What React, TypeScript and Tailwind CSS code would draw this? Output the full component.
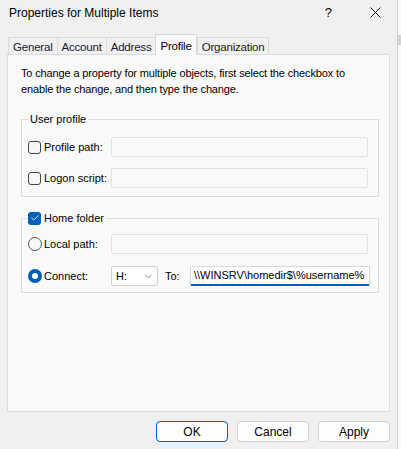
import { ChevronDown, Check } from 'lucide-react';

const dlgFont = { fontFamily: '"Liberation Sans", Arial, sans-serif' };

function Tab({ label, active }: { label: string; active?: boolean }) {
  if (active) {
    return (
      <div className="relative z-10 -mb-px h-[21px] px-[4px] pt-[3px] bg-[#f9f9f9] border border-b-0 border-[#d9d9d9] text-[11.5px] tracking-[-0.2px] text-black">
        {label}
      </div>
    );
  }
  return (
    <div className="h-[17px] px-[4px] pt-[2px] bg-[#f0f0f0] border border-b-0 border-[#dadada] -mr-px text-[11.5px] tracking-[-0.2px] text-[#1a1a2e] leading-[15px]">
      {label}
    </div>
  );
}

function CheckBox({ checked }: { checked?: boolean }) {
  if (checked) {
    return (
      <span className="flex items-center justify-center w-[13px] h-[13px] rounded-[3px] bg-[#005fb8]">
        <Check size={10} strokeWidth={2} className="text-white" />
      </span>
    );
  }
  return <span className="block w-[13px] h-[13px] rounded-[3px] border border-[#444] bg-[#f6f6f6]" />;
}

function Radio({ checked }: { checked?: boolean }) {
  if (checked) {
    return (
      <span className="flex items-center justify-center w-[14px] h-[14px] rounded-full bg-[#005fb8]">
        <span className="block w-[6px] h-[6px] rounded-full bg-white" />
      </span>
    );
  }
  return <span className="block w-[14px] h-[14px] rounded-full border border-[#555] bg-[#f6f6f6]" />;
}

function EmptyField() {
  return <div className="w-[257px] h-[20px] rounded-[2px] border border-[#e2e2e2] bg-[#f9f9f9]" />;
}

function Button({ label, focused }: { label: string; focused?: boolean }) {
  return (
    <button
      className={
        'w-[72px] h-[21px] rounded-[4px] bg-[#fdfdfd] text-[12px] text-black leading-none ' +
        (focused ? 'border border-[#005fb8]' : 'border border-[#d0d0d0]')
      }
    >
      {label}
    </button>
  );
}

export default function App() {
  return (
    <div className="flex w-[401px] h-[449px] bg-[#f0f0f0] overflow-hidden" style={dlgFont}>
      <div className="w-[397px] flex flex-col">
        {/* title bar */}
        <div className="h-[25px] flex items-center pl-[9px] pr-[16px]">
          <span className="text-[12px] text-black">Properties for Multiple Items</span>
          <span className="ml-auto mr-[38px] text-[13px] text-black">?</span>
          <svg width="11" height="11" viewBox="0 0 11 11" className="mb-[1px]">
            <path d="M0.5 0.5 L10.5 10.5 M10.5 0.5 L0.5 10.5" stroke="#111" strokeWidth="1" fill="none" />
          </svg>
        </div>

        {/* tabs */}
        <div className="mt-[9px] h-[20px] flex items-end pl-[8px]">
          <Tab label="General" />
          <Tab label="Account" />
          <Tab label="Address" />
          <Tab label="Profile" active />
          <Tab label="Organization" />
        </div>

        {/* page */}
        <div className="ml-[7px] w-[383px] h-[358px] border border-[#dcdcdc] bg-[#f9f9f9] pl-[13px] pt-[10px] text-[11px] text-black">
          <p className="leading-[16px] tracking-[-0.14px]">
            To change a property for multiple objects, first select the checkbox to
            <br />
            enable the change, and then type the change.
          </p>

          <fieldset className="mt-[14px] w-[358px] border border-[#dcdcdc] pl-[6px] pb-[8px]">
            <legend className="px-[2px] leading-[16px]">User profile</legend>
            <div className="mt-[10px] flex flex-col gap-[11px]">
              <div className="flex items-center h-[20px]">
                <CheckBox />
                <span className="ml-[3px] w-[67px]">Profile path:</span>
                <EmptyField />
              </div>
              <div className="flex items-center h-[20px]">
                <CheckBox />
                <span className="ml-[3px] w-[67px]">Logon script:</span>
                <EmptyField />
              </div>
            </div>
          </fieldset>

          <fieldset className="mt-[13px] w-[358px] border border-[#dcdcdc] pl-[6px] pb-[6px]">
            <legend className="pr-[2px] flex items-center gap-[3px] leading-[16px]">
              <CheckBox checked />
              <span>Home folder</span>
            </legend>
            <div className="mt-[8px] flex flex-col gap-[12px]">
              <div className="flex items-center h-[20px]">
                <Radio />
                <span className="ml-[2px] w-[67px]">Local path:</span>
                <EmptyField />
              </div>
              <div className="flex items-center h-[20px]">
                <Radio checked />
                <span className="ml-[2px] w-[67px]">Connect:</span>
                <div className="w-[47px] h-[20px] flex items-center justify-between pl-[4px] pr-[3px] border border-[#cfcfcf] bg-white rounded-[2px]">
                  <span>H:</span>
                  <ChevronDown size={11} strokeWidth={1.5} className="text-[#444]" />
                </div>
                <span className="ml-[7px] w-[25px]">To:</span>
                <div className="w-[180px] h-[20px] flex items-center pl-[3px] border border-[#d6d6d6] border-b-2 border-b-[#005fb8] bg-white rounded-[2px] whitespace-nowrap overflow-hidden">
                  \\WINSRV\homedir$\%username%
                </div>
              </div>
            </div>
          </fieldset>
        </div>

        {/* buttons */}
        <div className="mt-[9px] flex justify-end gap-[9px] pr-[7px]">
          <Button label="OK" focused />
          <Button label="Cancel" />
          <Button label="Apply" />
        </div>
      </div>

      {/* neighbouring window edge */}
      <div className="flex-1 border-l border-[#cfcfcf] bg-[#fafafa] pt-[35px]">
        <div className="h-[10px] bg-[#d4d4d4]" />
      </div>
    </div>
  );
}
